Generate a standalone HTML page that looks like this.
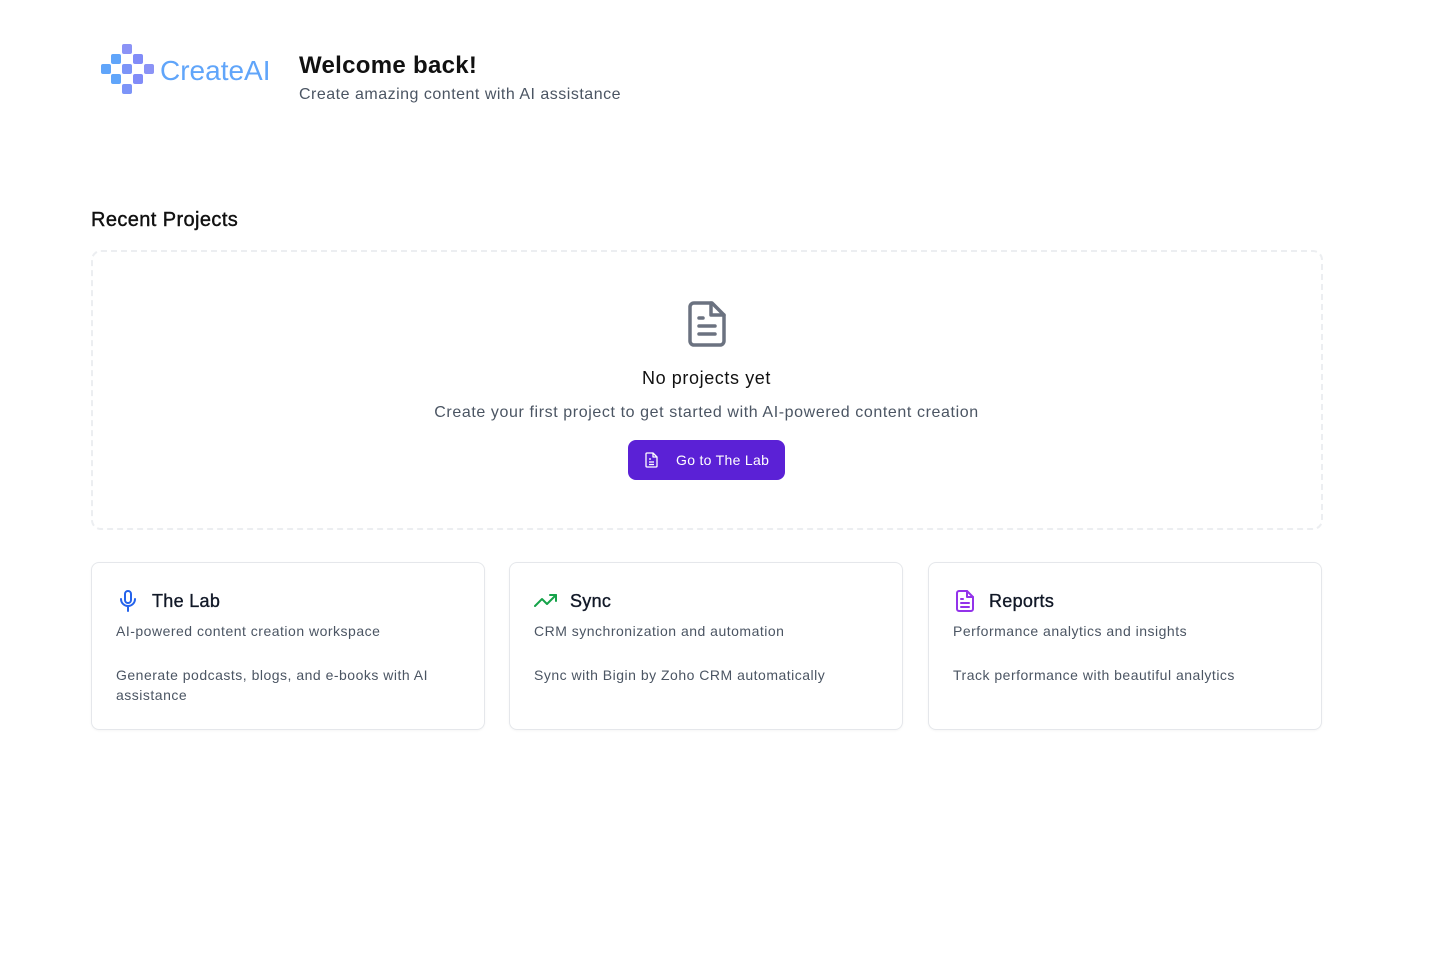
<!DOCTYPE html>
<html><head><meta charset="utf-8"><style>
*{box-sizing:border-box;margin:0;padding:0}
body{width:1452px;height:960px;background:#fff;font-family:"Liberation Sans",sans-serif;color:#111827;position:relative;overflow:hidden}
.abs{position:absolute}
.sq{position:absolute;width:10px;height:10px;border-radius:2px}
.card{position:absolute;top:562px;width:394px;height:168px;border:1px solid #e5e7eb;border-radius:8px;box-shadow:0 1px 2px rgba(0,0,0,.04)}
.card h3{position:absolute;left:60px;top:28px;font-size:18px;font-weight:normal;color:#111827;letter-spacing:.3px;-webkit-text-stroke:.35px #111827}
.card .s{position:absolute;left:24px;top:60px;font-size:14px;color:#4b5563;letter-spacing:.5px}
.card .d{position:absolute;left:24px;top:102px;font-size:14px;color:#4b5563;line-height:20px;width:350px;letter-spacing:.5px}
.card svg{position:absolute;left:24px;top:26px}
</style></head><body>
<div class="sq" style="left:122px;top:44px;background:#8b93f6"></div>
<div class="sq" style="left:111px;top:54px;background:#60a5fa"></div>
<div class="sq" style="left:133px;top:54px;background:#818cf8"></div>
<div class="sq" style="left:101px;top:64px;background:#60a5fa"></div>
<div class="sq" style="left:122px;top:64px;background:#7c94f8"></div>
<div class="sq" style="left:144px;top:64px;background:#8b93f6"></div>
<div class="sq" style="left:111px;top:74px;background:#60a5fa"></div>
<div class="sq" style="left:133px;top:74px;background:#818cf8"></div>
<div class="sq" style="left:122px;top:84px;background:#7c94f8"></div>
<div class="abs" style="left:160px;top:55px;font-size:28px;color:#60a5fa;letter-spacing:0">CreateAI</div>
<div class="abs" style="left:299px;top:52px;font-size:24px;font-weight:bold;color:#111;letter-spacing:.3px">Welcome back!</div>
<div class="abs" style="left:299px;top:86px;font-size:16px;color:#4b5563;letter-spacing:.5px">Create amazing content with AI assistance</div>
<div class="abs" style="left:91px;top:209px;font-size:20px;color:#111;letter-spacing:.4px;-webkit-text-stroke:.4px #111">Recent Projects</div>
<div class="abs" style="left:91px;top:250px;width:1232px;height:280px;border:2px dashed #eceef1;border-radius:10px"></div>
<svg class="abs" style="left:688px;top:301px" width="38" height="46" viewBox="0 0 38 46" fill="none" stroke="#6b7280" stroke-width="3.5" stroke-linejoin="round" stroke-linecap="round"><path d="M6 2h18l12 12v26a4 4 0 0 1-4 4H6a4 4 0 0 1-4-4V6a4 4 0 0 1 4-4z"/><path d="M23 2v12h13"/><path d="M11 17h4M11 25h16M11 33h16"/></svg>
<div class="abs" style="left:0;width:1413px;top:368px;text-align:center;font-size:18px;color:#111;letter-spacing:.6px">No projects yet</div>
<div class="abs" style="left:0;width:1413px;top:404px;text-align:center;font-size:16px;color:#4b5563;letter-spacing:.6px">Create your first project to get started with AI-powered content creation</div>
<div class="abs" style="left:628px;top:440px;width:157px;height:40px;background:#5b21d6;border-radius:8px;color:#fff;font-size:14px">
<svg style="position:absolute;left:16px;top:12px" width="15" height="16" viewBox="0 0 15 16" fill="none" stroke="#fff" stroke-width="1.3" stroke-linejoin="round"><path d="M3 1h6l4 4v9a1 1 0 0 1-1 1H3a1 1 0 0 1-1-1V2a1 1 0 0 1 1-1z"/><path d="M9 1v4h4M5 7h2M5 10h5M5 12.5h5"/></svg>
<span style="position:absolute;left:48px;top:12px;letter-spacing:.3px">Go to The Lab</span></div>
<div class="card" style="left:91px">
<svg width="24" height="24" viewBox="0 0 24 24" fill="none" stroke="#2563eb" stroke-width="2" stroke-linecap="round"><rect x="9" y="2" width="6" height="12" rx="3"/><path d="M5 10a7 7 0 0 0 14 0M12 17v5"/></svg>
<h3>The Lab</h3><div class="s">AI-powered content creation workspace</div><div class="d">Generate podcasts, blogs, and e-books with AI assistance</div></div>
<div class="card" style="left:509px">
<svg width="24" height="24" viewBox="0 0 24 24" fill="none" stroke="#16a34a" stroke-width="2" stroke-linecap="round" stroke-linejoin="round"><path d="M1 17l7-7 5 5 9-9"/><path d="M16 6h6v6"/></svg>
<h3>Sync</h3><div class="s">CRM synchronization and automation</div><div class="d">Sync with Bigin by Zoho CRM automatically</div></div>
<div class="card" style="left:928px">
<svg width="24" height="24" viewBox="0 0 24 24" fill="none" stroke="#9333ea" stroke-width="2" stroke-linecap="round" stroke-linejoin="round"><path d="M6 2h8l6 6v12a2 2 0 0 1-2 2H6a2 2 0 0 1-2-2V4a2 2 0 0 1 2-2z"/><path d="M14 2v6h6M8 10h2M8 14h8M8 18h8"/></svg>
<h3>Reports</h3><div class="s">Performance analytics and insights</div><div class="d">Track performance with beautiful analytics</div></div>
</body></html>
